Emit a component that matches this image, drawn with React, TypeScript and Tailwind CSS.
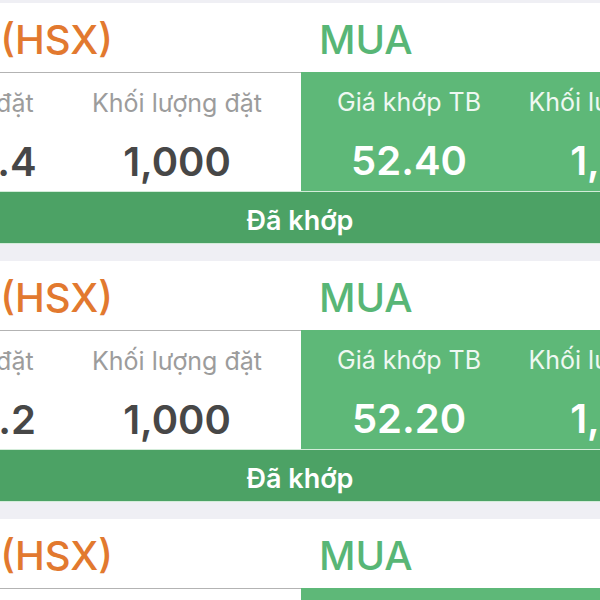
type Order = {
  symbol: string;
  exchange: string;
  side: string;
  price: string;
  qty: string;
  matchPrice: string;
  matchQty: string;
  status: string;
};

const orders: Order[] = [
  { symbol: "VNM", exchange: "HSX", side: "MUA", price: "52.4", qty: "1,000", matchPrice: "52.40", matchQty: "1,000", status: "Đã khớp" },
  { symbol: "VNM", exchange: "HSX", side: "MUA", price: "52.2", qty: "1,000", matchPrice: "52.20", matchQty: "1,000", status: "Đã khớp" },
  { symbol: "VNM", exchange: "HSX", side: "MUA", price: "52.0", qty: "1,000", matchPrice: "52.00", matchQty: "1,000", status: "Đã khớp" },
];

function Stat({ label, value, light, width }: { label: string; value: string; light?: boolean; width: string }) {
  return (
    <div className={`${width} shrink-0 flex flex-col items-center pt-[18px] gap-[26px] whitespace-nowrap`}>
      <div className={`text-[25px] leading-none ${light ? "text-white/90" : "text-[#9c9c9c]"}`}>{label}</div>
      <div className={`text-[40px] leading-none font-semibold ${light ? "text-white" : "text-[#474747]"}`}>{value}</div>
    </div>
  );
}

function OrderCard({ order }: { order: Order }) {
  return (
    <div className="bg-white shrink-0">
      <div className="h-[69px] pt-[4px] flex items-center text-[40px] leading-none font-medium">
        <div className="w-[113px] shrink-0 overflow-hidden flex justify-end whitespace-nowrap text-[#e2792f]">
          {order.symbol} ({order.exchange})
        </div>
        <div className="ml-[206px] text-[#58b676]">{order.side}</div>
      </div>

      <div className="h-[119px] flex -ml-[69px]">
        <div className="flex border-t border-[#b3b3b3]">
          <Stat label="Giá đặt" value={order.price} width="w-[122px]" />
          <Stat label="Khối lượng đặt" value={order.qty} width="w-[248px]" />
        </div>
        <div className="flex bg-[#5eb878]">
          <Stat label="Giá khớp TB" value={order.matchPrice} width="w-[216px]" light />
          <Stat label="Khối lượng khớp" value={order.matchQty} width="w-[214px]" light />
        </div>
      </div>

      <div className="h-[53px] pt-[6px] border-y border-[#d3ecd9] bg-[#4ca265] flex items-center justify-center text-white text-[27px] leading-none font-semibold">
        {order.status}
      </div>
    </div>
  );
}

export default function App() {
  return (
    <div className="w-[600px] h-[600px] overflow-hidden bg-[#efeff4] pt-[3px] flex flex-col gap-[17px] font-['Inter','Liberation_Sans',sans-serif]">
      {orders.map((o, i) => (
        <OrderCard key={i} order={o} />
      ))}
    </div>
  );
}
